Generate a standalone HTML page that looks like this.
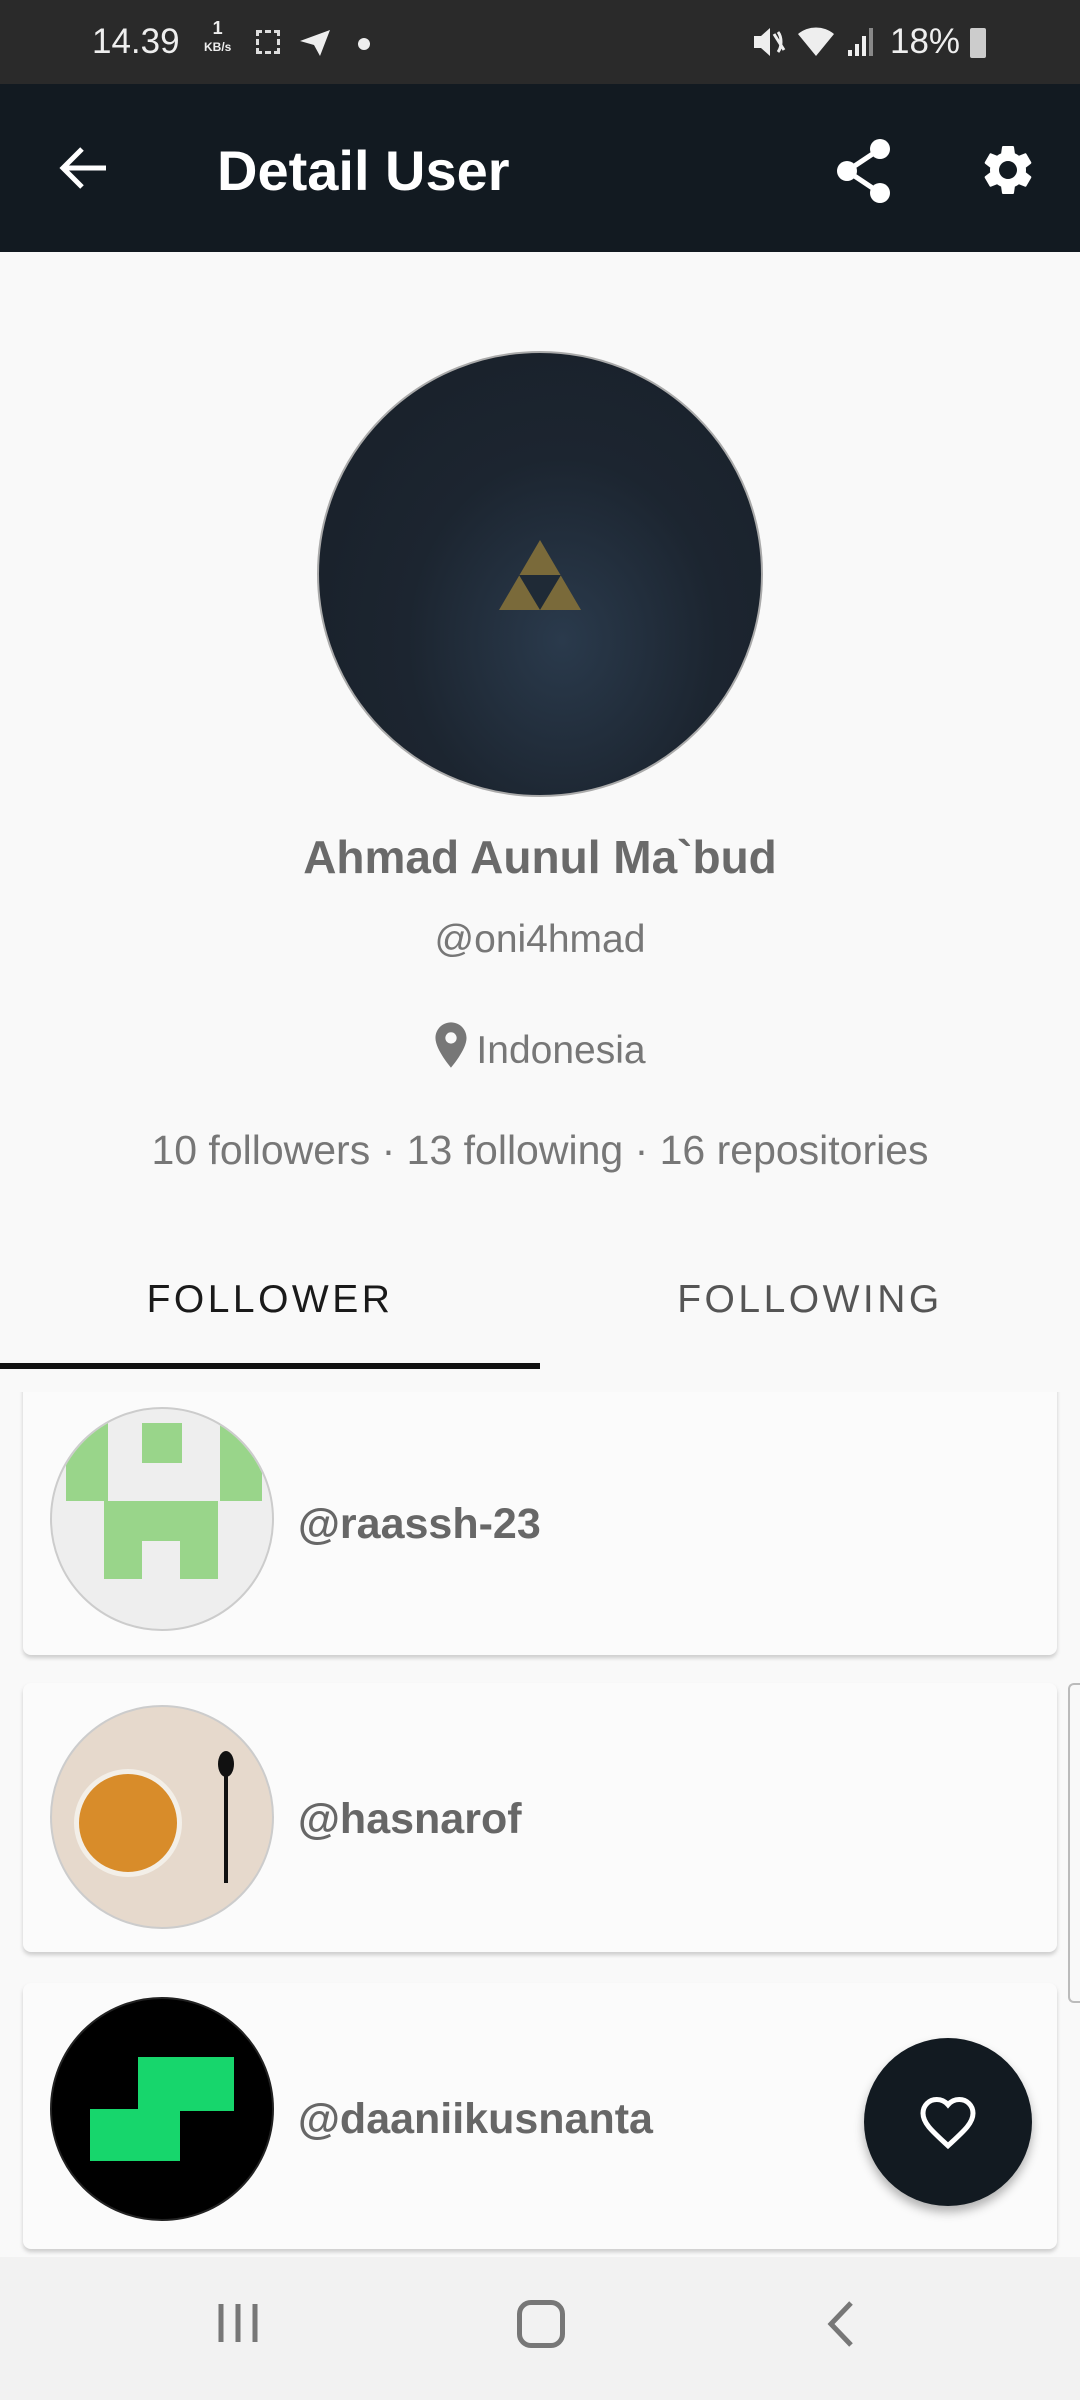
<!DOCTYPE html>
<html><head><meta charset="utf-8"><style>
*{margin:0;padding:0;box-sizing:border-box}
body{width:1080px;height:2400px;overflow:hidden;background:#f9f9f9;font-family:"Liberation Sans",Roboto,sans-serif;position:relative}
.abs{position:absolute}
.sb{left:0;top:0;width:1080px;height:84px;background:#2a2a2a;color:#eee;font-size:35px}
.tb{left:0;top:84px;width:1080px;height:168px;background:#121a21}
.title{left:217px;top:138px;font-size:56px;color:#fff;font-weight:bold;letter-spacing:0}
.c{text-align:center;width:1080px;left:0}
.card{left:23px;width:1034px;background:#fbfbfb;border-radius:8px;box-shadow:0 3px 4px rgba(0,0,0,.18)}
.av{position:absolute;left:27px;width:224px;height:224px;border-radius:50%;overflow:hidden;border:2px solid #ccc}
.un{position:absolute;left:275px;font-size:43px;font-weight:bold;color:#676767}
</style></head><body>
<div class="abs sb">
 <span class="abs" style="left:92px;top:22px">14.39</span>
 <span class="abs" style="left:204px;top:20px;font-size:18px;text-align:center;line-height:17px;font-weight:bold">1<br><span style="font-size:12px">KB/s</span></span>
 <div class="abs" style="left:256px;top:30px;width:24px;height:24px;border:3px dashed #ddd"></div>
 <svg class="abs" style="left:298px;top:28px" width="34" height="30" viewBox="0 0 34 30"><path d="M2 13 L32 2 L22 28 L16 17 Z" fill="#eee"/></svg>
 <div class="abs" style="left:358px;top:38px;width:12px;height:12px;border-radius:50%;background:#eee"></div>
 <svg class="abs" style="left:752px;top:26px" width="36" height="32" viewBox="0 0 36 32"><path d="M2 10h7l9-8v28l-9-8H2z" fill="#eee"/><path d="M22 8l10 16M26 6c4 5 4 15 0 20" stroke="#eee" stroke-width="3" fill="none"/></svg>
 <svg class="abs" style="left:796px;top:24px" width="44" height="36" viewBox="0 0 44 36"><path d="M2 10a28 28 0 0 1 36 0L20 32z" fill="#eee"/></svg>
 <svg class="abs" style="left:846px;top:26px" width="30" height="32" viewBox="0 0 30 32"><rect x="2" y="24" width="4" height="6" fill="#eee"/><rect x="9" y="18" width="4" height="12" fill="#eee"/><rect x="16" y="10" width="4" height="20" fill="#eee"/><rect x="23" y="2" width="4" height="28" fill="#888"/></svg>
 <span class="abs" style="left:890px;top:22px">18%</span>
 <div class="abs" style="left:970px;top:28px;width:16px;height:30px;background:#ccc;border-radius:2px"></div>
</div>
<div class="abs tb"></div>
<svg class="abs" style="left:58px;top:145px" width="52" height="46" viewBox="0 0 52 46"><path d="M48 23H6M24 4L5 23l19 19" stroke="#fff" stroke-width="5" fill="none"/></svg>
<div class="abs title">Detail User</div>
<svg class="abs" style="left:834px;top:138px" width="60" height="66" viewBox="0 0 60 66"><circle cx="46" cy="11" r="10" fill="#fff"/><circle cx="13" cy="33" r="10" fill="#fff"/><circle cx="46" cy="55" r="10" fill="#fff"/><path d="M46 11L13 33L46 55" stroke="#fff" stroke-width="5" fill="none"/></svg>
<svg class="abs" style="left:978px;top:140px" width="60" height="60" viewBox="0 0 24 24"><path fill="#fff" d="M19.14 12.940c.04-.3.06-.61.06-.94 0-.32-.02-.64-.07-.94l2.03-1.58c.18-.14.23-.41.12-.61l-1.92-3.32c-.12-.22-.37-.29-.59-.22l-2.39.96c-.5-.38-1.030-.7-1.62-.94l-.36-2.54c-.04-.24-.24-.41-.48-.41h-3.84c-.24 0-.43.17-.47.41l-.36 2.54c-.59.24-1.13.57-1.62.94l-2.39-.96c-.22-.08-.47 0-.59.22L2.74 8.87c-.12.21-.08.47.12.61l2.03 1.58c-.05.3-.09.63-.09.94s.02.64.07.94l-2.03 1.58c-.18.14-.23.41-.12.61l1.92 3.32c.12.22.37.29.59.22l2.39-.96c.5.38 1.03.7 1.62.94l.36 2.54c.05.24.24.41.48.41h3.84c.24 0 .44-.17.47-.41l.36-2.54c.59-.24 1.13-.56 1.62-.94l2.39.96c.22.08.47 0 .59-.22l1.92-3.32c.12-.22.07-.47-.12-.61l-2.01-1.58zM12 15.6c-1.98 0-3.6-1.62-3.6-3.6s1.62-3.6 3.6-3.6 3.6 1.62 3.6 3.6-1.62 3.6-3.6 3.6z"/></svg>

<div class="abs" style="left:317px;top:351px;width:446px;height:446px;border-radius:50%;background:radial-gradient(ellipse at 55% 65%,#2a3a4c 0%,#1c2530 45%,#181f28 100%);border:2px solid #aaa"></div>
<svg class="abs" style="left:497px;top:538px" width="86" height="74" viewBox="0 0 86 74"><path d="M43 2L84 72H2z" fill="#7a6a3a"/><path d="M22 37h42L43 72z" fill="#1f2a36"/></svg>

<div class="abs c" style="top:830px;font-size:46px;font-weight:bold;color:#6a6a6a">Ahmad Aunul Ma`bud</div>
<div class="abs c" style="top:918px;font-size:39px;color:#777">@oni4hmad</div>
<div class="abs c" style="top:1021px;font-size:39px;color:#777"><svg style="vertical-align:-6px;margin-right:8px" width="34" height="48" viewBox="0 0 24 34"><path d="M12 1C5.9 1 1 5.9 1 12c0 8.3 11 21 11 21s11-12.7 11-21C23 5.9 18.1 1 12 1zm0 15a4 4 0 1 1 0-8 4 4 0 0 1 0 8z" fill="#777"/></svg>Indonesia</div>
<div class="abs c" style="top:1127px;font-size:41px;color:#777">10 followers · 13 following · 16 repositories</div>

<div class="abs" style="left:0;top:1278px;width:540px;text-align:center;font-size:39px;color:#1a1a1a;letter-spacing:3.5px;font-weight:500">FOLLOWER</div>
<div class="abs" style="left:540px;top:1278px;width:540px;text-align:center;font-size:39px;color:#555;letter-spacing:3.5px">FOLLOWING</div>
<div class="abs" style="left:0;top:1363px;width:540px;height:6px;background:#111"></div>

<div class="abs" style="left:0;top:1392px;width:1080px;height:865px;overflow:hidden">
 <div class="card abs" style="top:-20px;height:283px">
  <div class="av" style="top:35px;background:#eee">
   <div class="abs" style="left:14px;top:14px;width:42px;height:78px;background:#99d58a"></div>
   <div class="abs" style="left:168px;top:14px;width:42px;height:78px;background:#99d58a"></div>
   <div class="abs" style="left:90px;top:14px;width:40px;height:40px;background:#99d58a"></div>
   <div class="abs" style="left:52px;top:92px;width:114px;height:78px;background:#99d58a"></div>
   <div class="abs" style="left:90px;top:132px;width:38px;height:40px;background:#eee"></div>
  </div>
  <div class="un" style="top:128px">@raassh-23</div>
 </div>
 <div class="card abs" style="top:291px;height:269px">
  <div class="av" style="top:22px;background:#e6d9cc">
   <div class="abs" style="left:22px;top:62px;width:108px;height:108px;border-radius:50%;background:#d88c2a;border:5px solid #f3efe8"></div>
   <div class="abs" style="left:166px;top:44px;width:16px;height:26px;border-radius:50%;background:#111"></div>
   <div class="abs" style="left:172px;top:66px;width:4px;height:110px;background:#111"></div>
  </div>
  <div class="un" style="top:112px">@hasnarof</div>
 </div>
 <div class="card abs" style="top:591px;height:266px">
  <div class="av" style="top:14px;background:#000;border-color:#222">
   <svg class="abs" style="left:36px;top:56px" width="150" height="110" viewBox="0 0 150 110"><path d="M50 2h96v54H92v50H2V54h48z" fill="#17d66c"/></svg>
  </div>
  <div class="un" style="top:112px">@daaniikusnanta</div>
 </div>
</div>
<div class="abs" style="left:1068px;top:1683px;width:12px;height:320px;border:2px solid #bbb;border-right:none;border-radius:6px 0 0 6px"></div>

<div class="abs" style="left:864px;top:2038px;width:168px;height:168px;border-radius:50%;background:#121a21;box-shadow:0 6px 10px rgba(0,0,0,.3)"></div>
<svg class="abs" style="left:918px;top:2094px" width="60" height="56" viewBox="0 0 24 22"><path d="M12 20.5l-1.4-1.3C5.4 14.4 2 11.3 2 7.5 2 4.4 4.4 2 7.5 2c1.7 0 3.4.8 4.5 2.1C13.1 2.8 14.8 2 16.5 2 19.6 2 22 4.4 22 7.5c0 3.8-3.4 6.9-8.6 11.7z" stroke="#fff" stroke-width="2" fill="none"/></svg>

<div class="abs" style="left:0;top:2257px;width:1080px;height:143px;background:#f2f2f2"></div>
<svg class="abs" style="left:215px;top:2300px" width="46" height="46" viewBox="0 0 46 46"><path d="M6 4v38M23 4v38M40 4v38" stroke="#777" stroke-width="5"/></svg>
<div class="abs" style="left:517px;top:2300px;width:48px;height:48px;border:5px solid #777;border-radius:14px"></div>
<svg class="abs" style="left:825px;top:2300px" width="30" height="48" viewBox="0 0 30 48"><path d="M26 3L6 24l20 21" stroke="#777" stroke-width="5" fill="none"/></svg>
</body></html>
